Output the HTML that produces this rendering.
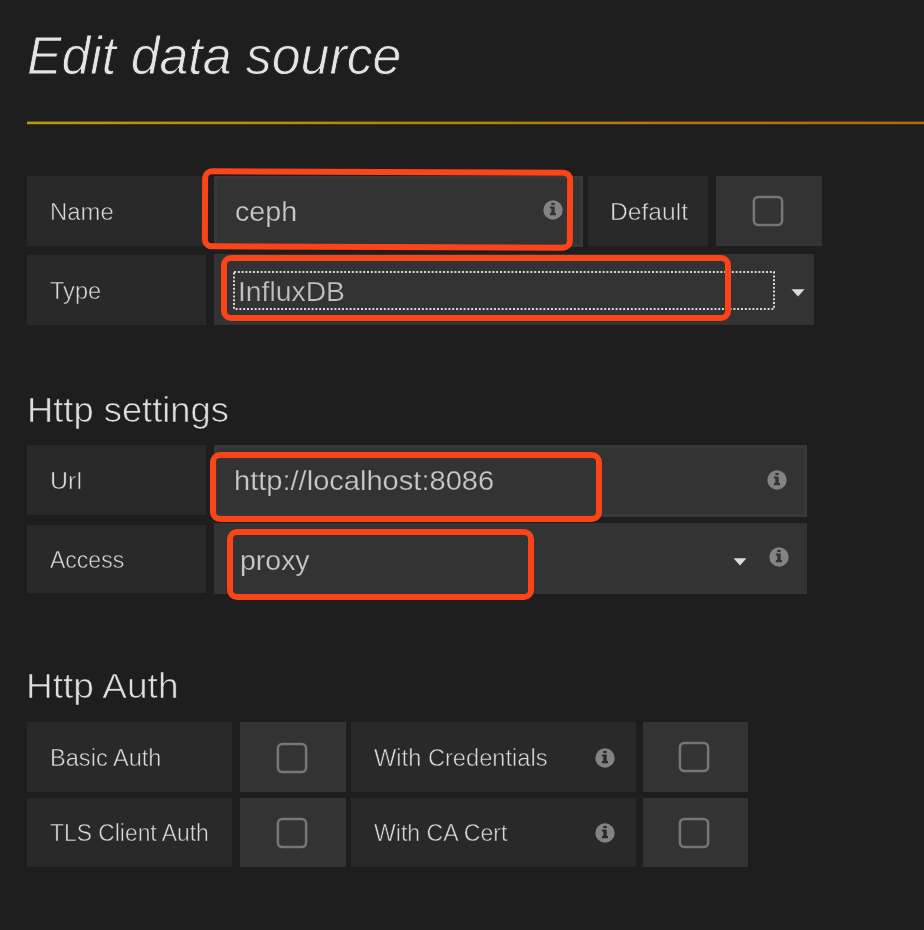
<!DOCTYPE html>
<html><head><meta charset="utf-8"><title>Edit data source</title>
<style>
html,body{margin:0;padding:0;}
body{width:924px;height:930px;overflow:hidden;background:#1f1e1f;position:relative;font-family:"Liberation Sans",sans-serif;}
.b{position:absolute;}
.t{position:absolute;line-height:1;white-space:pre;transform-origin:0 0;filter:grayscale(1);}
.r{position:absolute;box-sizing:border-box;border:6px solid #fc4419;border-radius:10px;}
</style></head><body>
<div class="b" style="left:27px;top:121px;width:897px;height:4px;background:linear-gradient(to bottom,rgba(31,30,31,0.6) 0,rgba(31,30,31,0.6) 25%,rgba(31,30,31,0) 25%,rgba(31,30,31,0) 75%,rgba(31,30,31,0.8) 75%),linear-gradient(to right,#b49c0e,#b0690e);"></div>
<div class="b" style="left:27px;top:176px;width:179px;height:70px;background:#292929;"></div>
<div class="b" style="left:214px;top:176px;width:369px;height:71px;background:#333333;border:3px solid #383838;box-sizing:border-box;"></div>
<div class="b" style="left:588px;top:176px;width:120px;height:70px;background:#292929;"></div>
<div class="b" style="left:716px;top:176px;width:106px;height:70px;background:#333333;"></div>
<div class="b" style="left:27px;top:255px;width:179px;height:70px;background:#292929;"></div>
<div class="b" style="left:214px;top:254px;width:600px;height:71px;background:#333333;"></div>
<div class="b" style="left:27px;top:445px;width:179px;height:70px;background:#292929;"></div>
<div class="b" style="left:214px;top:445px;width:593px;height:72px;background:#333333;border:3px solid #383838;box-sizing:border-box;"></div>
<div class="b" style="left:27px;top:525px;width:179px;height:68px;background:#292929;"></div>
<div class="b" style="left:214px;top:523px;width:593px;height:71px;background:#333333;"></div>
<div class="b" style="left:27px;top:722px;width:205px;height:70px;background:#292929;"></div>
<div class="b" style="left:240px;top:722px;width:106px;height:70px;background:#333333;"></div>
<div class="b" style="left:351px;top:722px;width:285px;height:70px;background:#292929;"></div>
<div class="b" style="left:643px;top:722px;width:105px;height:70px;background:#333333;"></div>
<div class="b" style="left:27px;top:798px;width:205px;height:69px;background:#292929;"></div>
<div class="b" style="left:240px;top:798px;width:106px;height:69px;background:#333333;"></div>
<div class="b" style="left:351px;top:798px;width:285px;height:69px;background:#292929;"></div>
<div class="b" style="left:643px;top:798px;width:105px;height:69px;background:#333333;"></div>
<div class="t" style="left:27.45px;top:27.8px;font-size:54.2px;color:#e4e4e4;transform:scaleX(0.956);-webkit-text-stroke:0.9px #1f1e1f;font-style:italic;">Edit data source</div>
<div class="t" style="left:49.79px;top:199.58px;font-size:24.64px;color:#d8d9da;transform:scaleX(0.97);-webkit-text-stroke:0.5px #292929;">Name</div>
<div class="t" style="left:234.65px;top:198.32px;font-size:27.95px;color:#c8c8c8;transform:scaleX(1.026);-webkit-text-stroke:0.25px #333333;">ceph</div>
<div class="t" style="left:610.03px;top:200.96px;font-size:23.19px;color:#d8d9da;transform:scaleX(1.062);-webkit-text-stroke:0.5px #292929;">Default</div>
<div class="t" style="left:49.53px;top:278.55px;font-size:24.49px;color:#d8d9da;transform:scaleX(0.964);-webkit-text-stroke:0.5px #292929;">Type</div>
<div class="t" style="left:238.45px;top:278.62px;font-size:26.96px;color:#c0c0c0;transform:scaleX(1.05);-webkit-text-stroke:0.25px #333333;">InfluxDB</div>
<div class="t" style="left:26.79px;top:393.0px;font-size:35.8px;color:#dedede;transform:scaleX(1.015);-webkit-text-stroke:0.7px #1f1e1f;">Http settings</div>
<div class="t" style="left:49.82px;top:469.71px;font-size:23.7px;color:#d8d9da;transform:scaleX(1.056);-webkit-text-stroke:0.5px #292929;">Url</div>
<div class="t" style="left:49.88px;top:547.73px;font-size:24.35px;color:#d8d9da;transform:scaleX(0.945);-webkit-text-stroke:0.5px #292929;">Access</div>
<div class="t" style="left:233.96px;top:466.75px;font-size:28.08px;color:#c8c8c8;transform:scaleX(1.035);-webkit-text-stroke:0.25px #333333;">http://localhost:8086</div>
<div class="t" style="left:239.95px;top:545.89px;font-size:28.49px;color:#c8c8c8;transform:scaleX(0.999);-webkit-text-stroke:0.25px #333333;">proxy</div>
<div class="t" style="left:26.23px;top:667.63px;font-size:35.94px;color:#dedede;transform:scaleX(1.032);-webkit-text-stroke:0.7px #1f1e1f;">Http Auth</div>
<div class="t" style="left:49.81px;top:746.13px;font-size:24.35px;color:#d8d9da;transform:scaleX(0.969);-webkit-text-stroke:0.5px #292929;">Basic Auth</div>
<div class="t" style="left:49.64px;top:821.13px;font-size:24.35px;color:#d8d9da;transform:scaleX(0.939);-webkit-text-stroke:0.5px #292929;">TLS Client Auth</div>
<div class="t" style="left:373.88px;top:746.88px;font-size:23.04px;color:#d8d9da;transform:scaleX(1.027);-webkit-text-stroke:0.5px #292929;">With Credentials</div>
<div class="t" style="left:373.88px;top:821.91px;font-size:23.19px;color:#d8d9da;transform:scaleX(0.996);-webkit-text-stroke:0.5px #292929;">With CA Cert</div>
<svg class="b" style="left:542.6px;top:200px" width="20" height="20" viewBox="0 0 20 20"><circle cx="10" cy="10" r="9.7" fill="#838383"/><rect x="8.3" y="2.9" width="3.4" height="2.2" fill="#333333"/><path d="M6.9 6.6 H11.7 V13.1 H13.0 V15.2 H6.9 V13.1 H8.3 V8.4 H6.9 Z" fill="#333333"/></svg>
<svg class="b" style="left:767px;top:469.9px" width="20" height="20" viewBox="0 0 20 20"><circle cx="10" cy="10" r="9.7" fill="#838383"/><rect x="8.3" y="2.9" width="3.4" height="2.2" fill="#333333"/><path d="M6.9 6.6 H11.7 V13.1 H13.0 V15.2 H6.9 V13.1 H8.3 V8.4 H6.9 Z" fill="#333333"/></svg>
<svg class="b" style="left:768.6px;top:546.5px" width="20" height="20" viewBox="0 0 20 20"><circle cx="10" cy="10" r="9.7" fill="#838383"/><rect x="8.3" y="2.9" width="3.4" height="2.2" fill="#333333"/><path d="M6.9 6.6 H11.7 V13.1 H13.0 V15.2 H6.9 V13.1 H8.3 V8.4 H6.9 Z" fill="#333333"/></svg>
<svg class="b" style="left:595.3px;top:747.9px" width="20" height="20" viewBox="0 0 20 20"><circle cx="10" cy="10" r="9.7" fill="#838383"/><rect x="8.3" y="2.9" width="3.4" height="2.2" fill="#292929"/><path d="M6.9 6.6 H11.7 V13.1 H13.0 V15.2 H6.9 V13.1 H8.3 V8.4 H6.9 Z" fill="#292929"/></svg>
<svg class="b" style="left:595.3px;top:823.1px" width="20" height="20" viewBox="0 0 20 20"><circle cx="10" cy="10" r="9.7" fill="#838383"/><rect x="8.3" y="2.9" width="3.4" height="2.2" fill="#292929"/><path d="M6.9 6.6 H11.7 V13.1 H13.0 V15.2 H6.9 V13.1 H8.3 V8.4 H6.9 Z" fill="#292929"/></svg>
<svg class="b" style="left:750.5px;top:194.3px" width="34" height="34" viewBox="0 0 34 34"><rect x="2.9" y="2.9" width="28.2" height="28.2" rx="4.5" ry="4.5" fill="none" stroke="#767676" stroke-width="2.5"/></svg>
<svg class="b" style="left:274.6px;top:740.5px" width="34" height="34" viewBox="0 0 34 34"><rect x="2.9" y="2.9" width="28.2" height="28.2" rx="4.5" ry="4.5" fill="none" stroke="#767676" stroke-width="2.5"/></svg>
<svg class="b" style="left:274.6px;top:815.8px" width="34" height="34" viewBox="0 0 34 34"><rect x="2.9" y="2.9" width="28.2" height="28.2" rx="4.5" ry="4.5" fill="none" stroke="#767676" stroke-width="2.5"/></svg>
<svg class="b" style="left:677.2px;top:740.4px" width="34" height="34" viewBox="0 0 34 34"><rect x="2.9" y="2.9" width="28.2" height="28.2" rx="4.5" ry="4.5" fill="none" stroke="#767676" stroke-width="2.5"/></svg>
<svg class="b" style="left:677.2px;top:815.8px" width="34" height="34" viewBox="0 0 34 34"><rect x="2.9" y="2.9" width="28.2" height="28.2" rx="4.5" ry="4.5" fill="none" stroke="#767676" stroke-width="2.5"/></svg>
<svg class="b" style="left:791px;top:289px" width="14" height="8" viewBox="0 0 14 8"><path d="M0.5 0.3 H13.5 L7 7.5 Z" fill="#dcdcdc"/></svg>
<svg class="b" style="left:733px;top:558px" width="14" height="8" viewBox="0 0 14 8"><path d="M0.5 0.3 H13.5 L7 7.5 Z" fill="#dcdcdc"/></svg>
<svg class="b" style="left:232px;top:270px" width="544" height="41" viewBox="0 0 544 41"><rect x="2" y="2" width="540" height="37" fill="none" stroke="#d8d8d8" stroke-width="2" stroke-dasharray="2 1.8"/></svg>
<div class="r" style="left:202px;top:168.6px;width:371px;height:81px;transform:rotate(0.21deg)"></div>
<div class="r" style="left:221px;top:255px;width:510px;height:66px"></div>
<div class="r" style="left:210px;top:452px;width:392px;height:70px"></div>
<div class="r" style="left:227px;top:529px;width:307px;height:71px"></div>
</body></html>
